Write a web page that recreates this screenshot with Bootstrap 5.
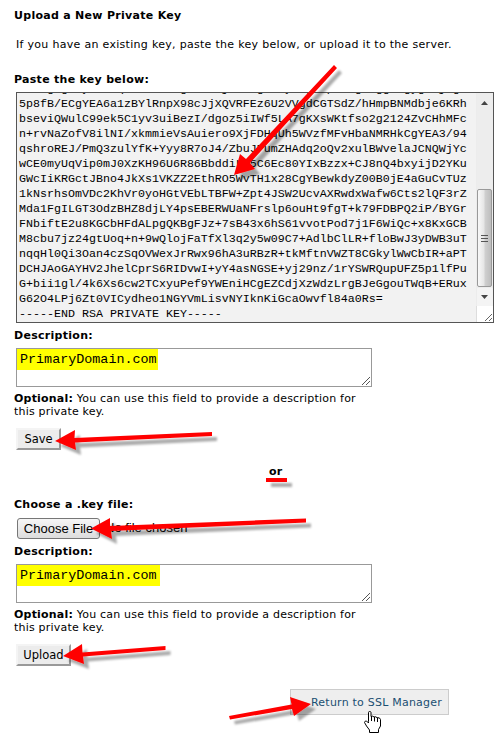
<!DOCTYPE html>
<html lang="en">
<head>
<meta charset="utf-8">
<meta name="viewport" content="width=device-width, initial-scale=1">
<title>Upload a New Private Key</title>
<link href="https://cdn.jsdelivr.net/npm/bootstrap@5.3.0/dist/css/bootstrap.min.css" rel="stylesheet">
<style>
body{font:11px/13px Verdana,"DejaVu Sans",sans-serif;color:#000;background:#fff;height:739px;overflow:hidden}
.page-main{padding:9px 6px 0 14px;height:739px}
.heading{font-size:11px;line-height:14px;font-weight:700;margin:0;white-space:nowrap;letter-spacing:.29px}
.intro{margin:15px 0 0 2px;line-height:14px;white-space:nowrap;letter-spacing:.3px}
.paste-label{margin-top:21px}
.keybox{margin:5px 0 0 2px;width:478px;height:231px;border:1px solid #555;background:#f2f2f2}
.keytext{margin:-11px 0 0 2px;font:11.67px/15px "Liberation Mono",monospace;overflow:visible;color:#000}
.clip{overflow:hidden}
.scroller{width:17px;background:#ececec}
.scroller svg{display:block}
.desc-label{margin-top:6px}
.descbox{margin:5px 0 0 2px;width:356px;height:39px;border:1px solid #999;background:#fff}
.hl{background:#ff0;font:13.4px/21px "Liberation Mono",monospace;padding-left:3px;height:21px;width:141px}
.hl-wide{width:143px}
.grip{right:1px;bottom:1px}
.help{margin:5px 0 0;width:356px;white-space:nowrap;letter-spacing:.2px}
.oldbtn,.oldbtn:hover{margin:10px 0 0 2px;border:2px solid;border-color:#f4f4f4 #999 #999 #f4f4f4;background:#ececec;border-radius:0;padding:0;font-size:11.5px;line-height:17px;color:#000;height:22px}
.save{width:45px}
.upload{width:55px}
.or-label{margin:15px 0 0 255px}
.file-label{margin-top:19px}
.file-row{margin:6px 0 0 3px}
.filebtn,.filebtn:hover{border:1px solid #777;border-radius:3px;background:linear-gradient(#f6f6f6,#ddd);font:13px/18px "Liberation Sans",sans-serif;width:83px;height:21px;padding:0;color:#000;white-space:nowrap}
.filename{font:13px/20px "Liberation Sans",sans-serif;margin-left:5px}
.return-link{margin:23px 0 0 276px;width:159px;height:26px;border:1px solid #ccc;background:#eee;font-size:11px;letter-spacing:.22px;line-height:25px;padding-left:20px;white-space:nowrap;text-decoration:none}
.return-link,.return-link:hover{color:#1b4f72}
.notes{left:0;top:0;pointer-events:none}
</style>
<script src="https://cdn.jsdelivr.net/npm/bootstrap@5.3.0/dist/js/bootstrap.bundle.min.js"></script>
</head>
<body class="position-relative">
<main class="page-main d-flex flex-column align-items-start">
  <h1 class="heading">Upload a New Private Key</h1>
  <p class="intro">If you have an existing key, paste the key below, or upload it to the server.</p>
  <div class="heading paste-label">Paste the key below:</div>
  <div class="keybox d-flex">
    <div class="clip flex-grow-1"><pre class="keytext">    g g  y    q        g     j    g   y  g  p   g  gg  gyg  j g
5p8fB/ECgYEA6a1zBYlRnpX98cJjXQVRFEz6U2VVgdCGTSdZ/hHmpBNMdbje6KRh
bseviQWulC99ek5C1yv3uiBezI/dgoz5iIWf5LA7gKXsWKtfso2g2124ZvCHhMFc
n+rvNaZofV8ilNI/xkmmieVsAuiero9XjFDHqUh5WVzfMFvHbaNMRHkCgYEA3/94
qshroREJ/PmQ3zulYfK+Yyy8R7oJ4/ZbuJPumZHAdq2oQv2xulBWvelaJCNQWjYc
wCE0myUqVip0mJ0XzKH96U6R86BbddiLo5C6Ec80YIxBzzx+CJ8nQ4bxyijD2YKu
GWcIiKRGctJBno4JkXs1VKZZ2EthRO5WvTH1x28CgYBewkdyZ00B0jE4aGuCvTUz
1kNsrhsOmVDc2KhVr0yoHGtVEbLTBFW+Zpt4JSW2UcvAXRwdxWafw6Cts2lQF3rZ
Mda1FgILGT3OdzBHZ8djLY4psEBERWUaNFrslp6ouHt9fgT+k79FDBPQ2iP/BYGr
FNbiftE2u8KGCbHFdALpgQKBgFJz+7sB43x6hS61vvotPod7j1F6WiQc+x8KxGCB
M8cbu7jz24gtUoq+n+9wQlojFaTfXl3q2y5w09C7+AdlbClLR+floBwJ3yDWB3uT
nqqHl0Qi3Oan4czSqOVWexJrRwx96hA3uRBzR+tkMftnVWZT8CGkylWwCbIR+aPT
DCHJAoGAYHV2JhelCprS6RIDvwI+yY4asNGSE+yj29nz/1rYSWRQupUFZ5p1lfPu
G+bii1gl/4k6Xs6cw2TCxyuPef9YWEniHCgEZCdjXzWdzLrgBJeGgouTWqB+ERux
G62O4LPj6Zt0VICydheo1NGYVmLisvNYIknKiGcaOwvfl84a0Rs=
-----END RSA PRIVATE KEY-----</pre></div>
    <div class="scroller flex-shrink-0">
      <svg width="17" height="229">
        <defs><linearGradient id="th"><stop offset="0" stop-color="#fafafa"/><stop offset=".45" stop-color="#e6e6e6"/><stop offset=".55" stop-color="#cfcfcf"/><stop offset="1" stop-color="#bcbcbc"/></linearGradient></defs>
        <rect x="1" width="16" height="213" fill="#ededed"/>
        <path d="M5 12l3.500-4 3.500 4z" fill="#444"/>
        <rect x="1.500" y="96.500" width="14" height="97" rx="1.500" fill="url(#th)" stroke="#999"/>
        <path d="M5 142.500h7M5 145.500h7M5 148.500h7" stroke="#555"/>
        <rect x="1" y="195" width="16" height="18" fill="#f4f4f4"/>
        <path d="M5 202h7l-3.500 4z" fill="#444"/>
        <rect y="213" width="17" height="16" fill="#fff"/>
        <path d="M.5 213v16" stroke="#ddd"/>
        <path d="M9 228l7-7M13 228l3-3" stroke="#666"/>
      </svg>
    </div>
  </div>
  <div class="heading desc-label">Description:</div>
  <div class="descbox position-relative"><div class="hl">PrimaryDomain.com</div>
    <svg class="grip position-absolute" width="8" height="8"><path d="M0 8L8 0M4 8l4-4" stroke="#555"/></svg></div>
  <div class="help"><b>Optional:</b> You can use this field to provide a description for<br>this private key.</div>
  <button class="btn oldbtn save">Save</button>
  <div class="heading or-label">or</div>
  <div class="heading file-label">Choose a .key file:</div>
  <div class="file-row d-flex"><button class="btn filebtn">Choose File</button><span class="filename">No file chosen</span></div>
  <div class="heading desc-label">Description:</div>
  <div class="descbox position-relative"><div class="hl hl-wide">PrimaryDomain.com</div>
    <svg class="grip position-absolute" width="8" height="8"><path d="M0 8L8 0M4 8l4-4" stroke="#555"/></svg></div>
  <div class="help"><b>Optional:</b> You can use this field to provide a description for<br>this private key.</div>
  <button class="btn oldbtn upload">Upload</button>
  <a class="return-link d-block" href="#">Return to SSL Manager</a>
</main>
<svg class="notes position-absolute" width="500" height="739">
  <defs><filter id="sh" x="0" y="0" width="500" height="739" filterUnits="userSpaceOnUse"><feDropShadow dx="5" dy="5" stdDeviation="1.300" flood-color="#000" flood-opacity=".33"/></filter></defs>
  <g fill="#f00" filter="url(#sh)">
    <path d="M234 175L240 154L246 159L334 65L337 68L250 163L255 169Z"/>
    <path d="M55 441L75 430L74.500 438L212 432V436L75 442.500L76 450Z"/>
    <path d="M266 478h21v4h-21z"/>
    <path d="M91 528.500L110 518V526L306 518.500V522.500L111 531L112 539Z"/>
    <path d="M63 656L82 644L82.500 652.500L165.500 646V650L83 656.500L84 664Z"/>
    <path d="M311 704L290 697L291.500 704.500L229 716L230 719.500L292 709L294 716Z"/>
  </g>
  <path d="M368.500 721.500V712.500q0-1 1.200-1t1.300 1V716.500q2-1 3 .5q2-.8 3 .7q3-.5 3.500 1.800V726l-2 3.500v3h-9V730l-3-4l-2-3.500q.5-2 2-1.500l2 2Z" fill="#fff" stroke="#000"/>
  <path d="M371.500 716v5M374.500 717v4.500M377.500 718v4" stroke="#000"/>
</svg>
</body>
</html>
